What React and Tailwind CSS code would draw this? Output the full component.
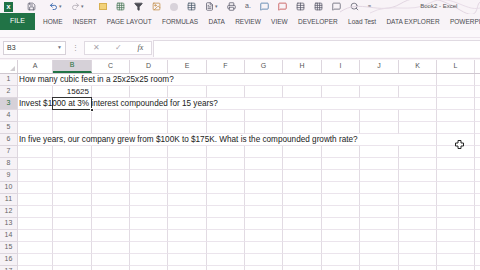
import { Save, Undo2, Redo2, Filter, Printer, Image, Table, Search, MessageSquare, Grid3x3, FileText } from 'lucide-react';

const cols = [
  ['A', 35], ['B', 39], ['C', 38], ['D', 38], ['E', 39], ['F', 38], ['G', 38],
  ['H', 39], ['I', 38], ['J', 39], ['K', 38], ['L', 38], ['M', 39],
];

const tabs = ['HOME', 'INSERT', 'PAGE LAYOUT', 'FORMULAS', 'DATA', 'REVIEW', 'VIEW', 'DEVELOPER', 'Load Test', 'DATA EXPLORER', 'POWERPIVOT'];

const cells = {
  1: 'How many cubic feet in a 25x25x25 room?',
  3: 'Invest $1000 at 3% interest compounded for 15 years?',
  6: 'In five years, our company grew from $100K to $175K. What is the compounded growth rate?',
};

function Caret() {
  return <span className="text-[5px] text-gray-500 ml-[1px]">▾</span>;
}

function QuickBar() {
  const ic = 'w-[9px] h-[9px]';
  return (
    <div className="h-[13px] flex items-center pl-[4px] gap-[9px] text-[#5a5a6a] relative">
      <svg className="absolute right-0 top-0" width="150" height="14" viewBox="0 0 150 14">
        <path d="M10 12 C 30 -2, 50 16, 70 4 S 110 -2, 130 10 S 145 6, 150 2" fill="none" stroke="#e2d6e2" strokeWidth="1" />
        <path d="M40 13 C 60 2, 80 14, 100 3 S 135 12, 150 8" fill="none" stroke="#e8dde8" strokeWidth="1" />
      </svg>
      <div className="w-[9px] h-[10px] bg-[#1e7145] flex items-center justify-center">
        <span className="text-white text-[6px] font-bold leading-none">X</span>
      </div>
      <Save className={`${ic} ml-[5px]`} strokeWidth={2} />
      <div className="flex items-center ml-[4px]">
        <Undo2 className={`${ic} text-[#3b6bb0]`} strokeWidth={2.5} />
        <Caret />
      </div>
      <div className="flex items-center">
        <Redo2 className={`${ic} text-[#b8b2bb]`} strokeWidth={2.5} />
        <Caret />
      </div>
      <div className="w-[8px] h-[7px] bg-[#f2d27a] border border-[#d8b050] ml-[6px]" />
      <Grid3x3 className={`${ic} text-[#4b7a5a]`} />
      <Filter className={`${ic} text-[#4a4a52] fill-[#4a4a52]`} />
      <Image className={`${ic} text-[#c08a40]`} />
      <div className="w-[8px] h-[8px] rounded-full bg-[#d8d2da]" />
      <Table className={`${ic} text-[#4a5a6a]`} />
      <div className="flex items-center">
        <FileText className={ic} />
        <Caret />
      </div>
      <Printer className={ic} />
      <span className="text-[7px] font-['Liberation_Sans',sans-serif]">a.</span>
      <MessageSquare className={`${ic} text-[#3f6fa0]`} />
      <MessageSquare className={`${ic} text-[#c04040]`} />
      <Table className={ic} />
      <Grid3x3 className={ic} />
      <MessageSquare className={ic} />
      <Search className={ic} />
      <span className="text-[6px]">=</span>
      <span className="ml-[40px] text-[6px] text-[#555] font-['Liberation_Sans',sans-serif] relative">Book2 - Excel</span>
    </div>
  );
}

function Tabs() {
  return (
    <div className="h-[17px] flex items-center font-['Liberation_Sans',sans-serif] text-[6.5px] text-[#4a4a50] whitespace-nowrap overflow-hidden">
      <div className="w-[35px] h-[17px] shrink-0 bg-[#217346] text-white flex items-center justify-center text-[7px]">FILE</div>
      <div className="flex items-center gap-[10.3px] pl-[8px]">
        {tabs.map((t) => (
          <span key={t}>{t}</span>
        ))}
      </div>
    </div>
  );
}

function FormulaBar() {
  return (
    <div className="h-[21px] flex items-center bg-[#fbf8fb] border-b border-[#e8e0e8] font-['Liberation_Sans',sans-serif]">
      <div className="ml-[3px] w-[63px] h-[14px] bg-white border border-[#d6d0d8] flex items-center justify-between px-[3px] text-[7px] text-[#333]">
        <span>B3</span>
        <span className="text-[5px] text-gray-500">▼</span>
      </div>
      <span className="ml-[6px] text-[7px] text-[#999] w-[12px]">⋮</span>
      <div className="w-[68px] h-[14px] bg-white border border-[#e0dae2] flex items-center justify-around text-[8px] text-[#a9a4ab]">
        <span>✕</span>
        <span>✓</span>
        <span className="italic font-['Liberation_Serif',serif] text-[#555]">fx</span>
      </div>
      <div className="flex-1 h-[17px] bg-white border-t border-l border-[#e0dae2] ml-[1px]" />
    </div>
  );
}

function Grid() {
  const rows = Array.from({ length: 17 }, (_, i) => i + 1);
  return (
    <div className="mt-[1px] font-['Liberation_Sans',sans-serif] relative">
      <div className="flex h-[14px] bg-white border-b border-[#cfc8d0]">
        <div className="w-[18px] shrink-0 border-r border-[#d8d0d8] relative">
          <div className="absolute right-[2px] bottom-[2px] w-0 h-0 border-l-[5px] border-l-transparent border-b-[5px] border-b-[#d0ccd0]" />
        </div>
        {cols.map(([c, w]) => (
          <div
            key={c}
            style={{ width: w }}
            className={`shrink-0 flex items-center justify-center text-[7px] border-r border-[#ddd6de] ${c === 'B' ? 'bg-[#d6d1d8] text-[#1e6e3a] border-b-2 border-b-[#217346]' : 'text-[#555]'}`}
          >
            {c}
          </div>
        ))}
      </div>
      {rows.map((r) => (
        <div key={r} className="flex h-[12px] bg-white">
          <div
            className={`w-[18px] shrink-0 flex items-center justify-center text-[7px] border-r border-b border-[#ddd6de] ${r === 3 ? 'bg-[#d6d1d8] text-[#1e6e3a]' : 'bg-[#f6f2f6] text-[#666]'}`}
          >
            {r}
          </div>
          {cols.map(([c, w], ci) => (
            <div
              key={c}
              style={{ width: w }}
              className={`shrink-0 relative border-b border-[#ebe4ec] ${cells[r] && ci < 10 ? '' : 'border-r border-r-[#e2dbe3]'}`}
            >
              {c === 'A' && cells[r] && (
                <span className="absolute left-[1px] top-[0px] text-[8.2px] leading-[12px] text-[#222] whitespace-nowrap z-30">
                  {cells[r]}
                </span>
              )}
              {c === 'B' && r === 2 && (
                <span className="absolute right-[2px] top-[0px] text-[8px] leading-[12px] text-[#222]">15625</span>
              )}
              {c === 'B' && r === 3 && (
                <div className="absolute -left-[1px] -top-[1px] w-[40px] h-[13px] border-[1.5px] border-[#333] z-20">
                  <div className="absolute -right-[3px] -bottom-[3px] w-[4px] h-[4px] bg-[#333] border border-white" />
                </div>
              )}
            </div>
          ))}
        </div>
      ))}
      <div className="absolute left-[455px] top-[80px] leading-none z-30">
        <svg width="9" height="9" viewBox="0 0 9 9">
          <path d="M3 0.5h3v2.5h2.5v3H6v2.5H3V6H0.5V3H3z" fill="white" stroke="#222" strokeWidth="1" />
        </svg>
      </div>
    </div>
  );
}

export default function App() {
  return (
    <div className="w-[480px] h-[270px] overflow-hidden bg-[#f8f3f7]">
      <QuickBar />
      <Tabs />
      <div className="h-[8px] bg-[#fbf8fb] border-b border-[#ece4ec]" />
      <FormulaBar />
      <Grid />
    </div>
  );
}
